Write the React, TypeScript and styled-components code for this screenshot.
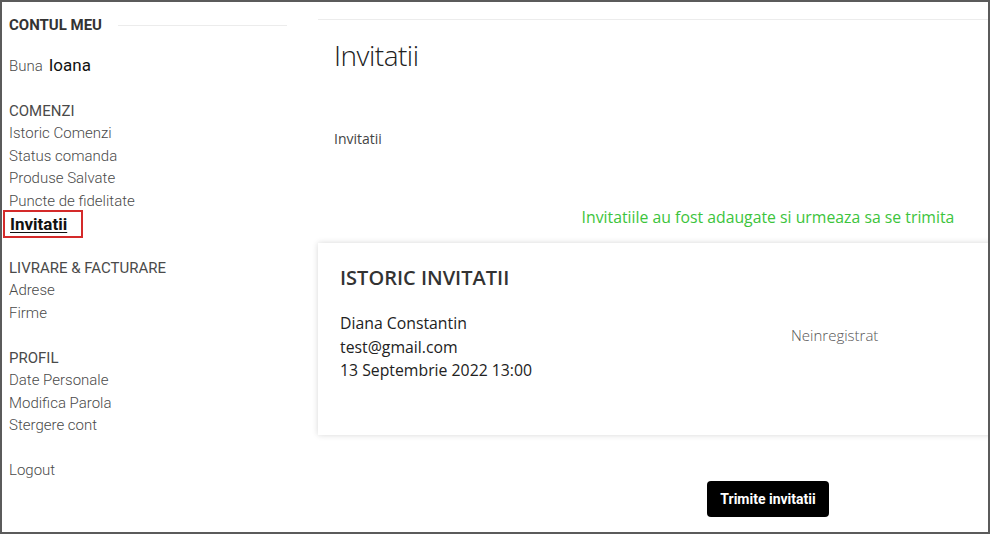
import styled, { createGlobalStyle } from 'styled-components'

const GlobalStyle = createGlobalStyle`
    html, body {
        margin: 0;
        padding: 0;
        background: #ffffff;
    }
    * {
        box-sizing: border-box;
    }
`

const Frame = styled.div`
    width: 990px;
    height: 534px;
    border: 2px solid #5b5b5b;
    display: flex;
    overflow: hidden;
    background: #ffffff;
    font-family: Roboto, 'Liberation Sans', sans-serif;
`

const Sidebar = styled.aside`
    width: 316px;
    flex-shrink: 0;
    padding: 14px 31px 0 7px;
    color: #4a4a4a;
`

const TitleRow = styled.div`
    display: flex;
    align-items: center;
    gap: 16px;
    height: 18px;
`

const SideTitle = styled.h2`
    margin: 0;
    font-size: 15px;
    font-weight: 700;
    color: #333;
    white-space: nowrap;
`

const Rule = styled.div`
    flex: 1;
    height: 1px;
    background: #ececec;
`

const Greeting = styled.div`
    margin-top: 20px;
    font-size: 15px;
    line-height: 22px;
    font-weight: 300;
    color: #4a4a4a;

    strong {
        font-weight: 400;
        font-size: 17px;
        color: #111;
        margin-left: 6px;
    }
`

const Group = styled.div`
    margin-top: 22.5px;
    display: flex;
    flex-direction: column;
    align-items: flex-start;
`

const GroupTitle = styled.span`
    font-size: 15px;
    line-height: 22.5px;
    color: #4a4a4a;
`

const NavItem = styled.a`
    font-size: 15px;
    line-height: 22.5px;
    font-weight: 300;
    color: #4a4a4a;
    text-decoration: none;
`

const ActiveItem = styled.a`
    margin: -2px 0 -4px -6px;
    height: 28px;
    padding: 0 14px 0 5px;
    border: 2px solid #d42a2a;
    font-size: 17px;
    line-height: 24px;
    font-weight: 700;
    color: #111;
    text-decoration: underline;
    text-underline-offset: 2px;
`

const Main = styled.main`
    width: 900px;
    flex-shrink: 0;
    display: flex;
    flex-direction: column;
    font-family: 'Open Sans', 'Noto Sans', sans-serif;
`

const TopRule = styled.div`
    margin-top: 17px;
    height: 1px;
    background: #ececec;
`

const PageTitle = styled.h1`
    margin: 17px 0 0 16px;
    font-size: 28px;
    font-weight: 300;
    letter-spacing: -0.5px;
    color: #222;
    line-height: 36px;
`

const Caption = styled.p`
    margin: 56px 0 0 16px;
    font-size: 14px;
    line-height: 20px;
    color: #444;
`

const Success = styled.p`
    margin: 57px 0 0;
    text-align: center;
    font-size: 15.8px;
    line-height: 22px;
    color: #3cc43c;
`

const Card = styled.section`
    margin-top: 15px;
    height: 192px;
    padding: 21px 22px;
    background: #fff;
    box-shadow: 0 0 6px rgba(0, 0, 0, 0.16);
`

const CardTitle = styled.h3`
    margin: 0;
    font-size: 20px;
    line-height: 28px;
    font-weight: 600;
    color: #333;
`

const InviteRow = styled.div`
    margin-top: 20px;
    display: grid;
    grid-template-columns: 451px auto;
`

const InviteInfo = styled.div`
    display: flex;
    flex-direction: column;
    font-size: 15.8px;
    line-height: 23.5px;
    color: #222;
`

const Status = styled.span`
    margin-top: 12.75px;
    font-size: 15px;
    line-height: 20px;
    font-weight: 300;
    color: #555;
`

const Actions = styled.div`
    margin-top: 46px;
    display: flex;
    justify-content: center;
`

const Button = styled.button`
    height: 36px;
    padding: 0 13px;
    border: none;
    border-radius: 4px;
    background: #000;
    color: #fff;
    font-family: Roboto, sans-serif;
    font-size: 14px;
    font-weight: 700;
`

const App = () => {
    return (
        <>
            <GlobalStyle />
            <Frame>
                <Sidebar>
                    <TitleRow>
                        <SideTitle>CONTUL MEU</SideTitle>
                        <Rule />
                    </TitleRow>
                    <Greeting>
                        Buna<strong>Ioana</strong>
                    </Greeting>
                    <Group>
                        <GroupTitle>COMENZI</GroupTitle>
                        <NavItem>Istoric Comenzi</NavItem>
                        <NavItem>Status comanda</NavItem>
                        <NavItem>Produse Salvate</NavItem>
                        <NavItem>Puncte de fidelitate</NavItem>
                        <ActiveItem>Invitatii</ActiveItem>
                    </Group>
                    <Group>
                        <GroupTitle>LIVRARE &amp; FACTURARE</GroupTitle>
                        <NavItem>Adrese</NavItem>
                        <NavItem>Firme</NavItem>
                    </Group>
                    <Group>
                        <GroupTitle>PROFIL</GroupTitle>
                        <NavItem>Date Personale</NavItem>
                        <NavItem>Modifica Parola</NavItem>
                        <NavItem>Stergere cont</NavItem>
                    </Group>
                    <Group>
                        <NavItem>Logout</NavItem>
                    </Group>
                </Sidebar>
                <Main>
                    <TopRule />
                    <PageTitle>Invitatii</PageTitle>
                    <Caption>Invitatii</Caption>
                    <Success>Invitatiile au fost adaugate si urmeaza sa se trimita</Success>
                    <Card>
                        <CardTitle>ISTORIC INVITATII</CardTitle>
                        <InviteRow>
                            <InviteInfo>
                                <span>Diana Constantin</span>
                                <span>test@gmail.com</span>
                                <span>13 Septembrie 2022 13:00</span>
                            </InviteInfo>
                            <Status>Neinregistrat</Status>
                        </InviteRow>
                    </Card>
                    <Actions>
                        <Button>Trimite invitatii</Button>
                    </Actions>
                </Main>
            </Frame>
        </>
    )
}

export default App
